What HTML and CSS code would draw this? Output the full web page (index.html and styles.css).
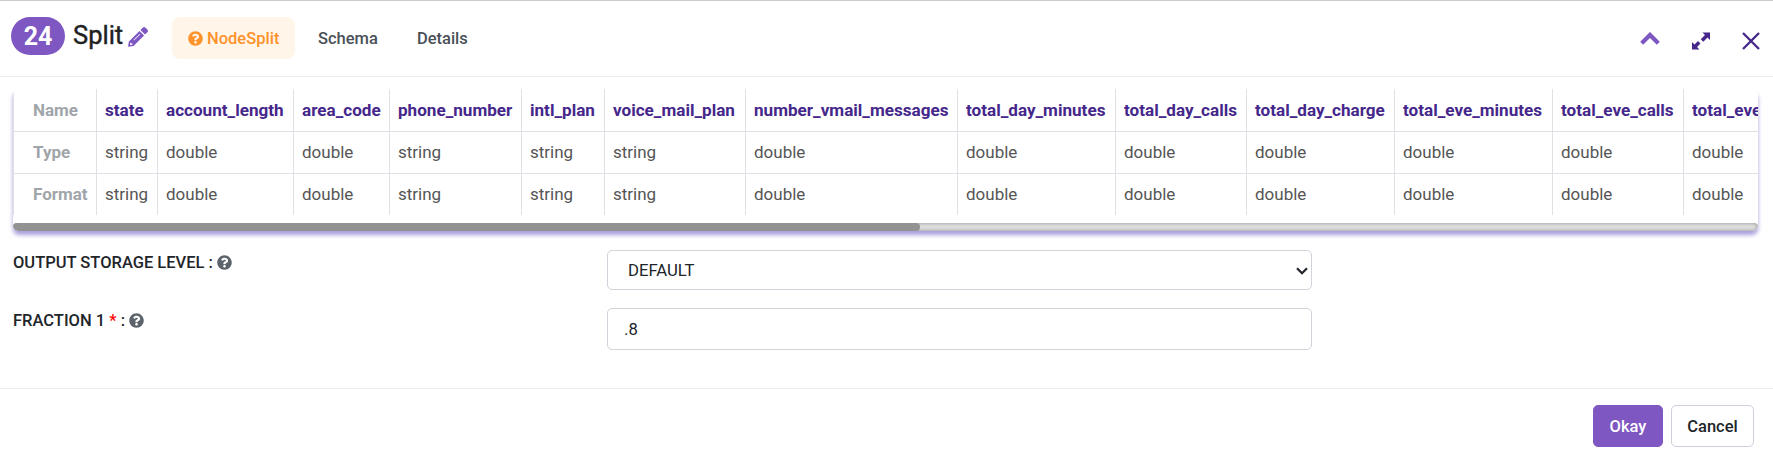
FILE: index.html
```html
<!DOCTYPE html>
<html lang="en">
<head>
<meta charset="utf-8">
<title>Split</title>
<link rel="stylesheet" href="styles.css">
</head>
<body>
<svg class="defs" width="0" height="0">
  <symbol id="help" viewBox="0 0 512 512"><path fill="currentColor" d="M504 256c0 137-111 248-248 248S8 393 8 256 119 8 256 8s248 111 248 248zM262.700 90c-54.500 0-89.300 23-116.500 63.800-3.500 5.300-2.400 12.400 2.700 16.300l34.700 26.300c5.200 3.900 12.600 3 16.700-2.100 17.900-22.700 30.100-35.800 57.300-35.800 20.400 0 45.700 13.100 45.700 33 0 15-12.400 22.700-32.500 34C247.100 238.500 216 254.900 216 296v4c0 6.600 5.400 12 12 12h56c6.600 0 12-5.400 12-12v-1.300c0-28.500 83.200-29.600 83.200-106.700 0-58-60.200-102-116.500-102zM256 338c-25.400 0-46 20.600-46 46s20.600 46 46 46 46-20.600 46-46-20.600-46-46-46z"/></symbol>
</svg>
<header class="header">
  <span class="badge">24</span>
  <h1 class="title">Split</h1>
  <svg class="pencil" viewBox="0 0 20 20"><path fill="currentColor" fill-rule="evenodd" d="M12.400 3 14.700.7a2 2 0 0 1 2.800 0l1.800 1.800a2 2 0 0 1 0 2.800L17 7.600zM11.500 3.900l4.600 4.600L5.500 19.100l-5 .7a.5.500 0 0 1-.4-.5l.8-4.800zM11.900 6.700l-6.400 6.400.5.500 6.400-6.400zM2.400 15.800l-.4 1.800.5.500 1.900-.4v-1.300H3.300v-.9z"/></svg>
  <nav class="tabs">
    <a class="tab active"><svg class="help-icon"><use href="#help"/></svg>NodeSplit</a>
    <a class="tab">Schema</a>
    <a class="tab">Details</a>
  </nav>
  <div class="actions">
    <svg class="chevron" viewBox="0 0 20 13"><path d="M1.700 11.200 10 2.900l8.300 8.300" fill="none" stroke="currentColor" stroke-width="4.200"/></svg>
    <svg class="expand" viewBox="0 0 18 18"><path fill="currentColor" d="M10.500.5H18V8l-2.500-2.500-4.200 4.200-2.500-2.500L13 3zM7.500 17.500H0V10l2.500 2.500L6 9l2.500 2.500L5 15z"/></svg>
    <svg class="close" viewBox="0 0 18 18"><path d="m1 1 16 16M17 1 1 17" fill="none" stroke="currentColor" stroke-width="2.300"/></svg>
  </div>
</header>
<main class="content">
  <div class="schema">
    <table class="schema-table">
      <colgroup><col class="w84"><col class="w61"><col class="w136"><col class="w96"><col class="w132"><col class="w83"><col class="w141"><col class="w212"><col class="w158"><col class="w131"><col class="w148"><col class="w158"><col class="w131"><col class="w148"></colgroup>
      <tr><th>Name</th><th>state</th><th>account_length</th><th>area_code</th><th>phone_number</th><th>intl_plan</th><th>voice_mail_plan</th><th>number_vmail_messages</th><th>total_day_minutes</th><th>total_day_calls</th><th>total_day_charge</th><th>total_eve_minutes</th><th>total_eve_calls</th><th>total_eve_charge</th></tr>
      <tr><th>Type</th><td>string</td><td>double</td><td>double</td><td>string</td><td>string</td><td>string</td><td>double</td><td>double</td><td>double</td><td>double</td><td>double</td><td>double</td><td>double</td></tr>
      <tr><th>Format</th><td>string</td><td>double</td><td>double</td><td>string</td><td>string</td><td>string</td><td>double</td><td>double</td><td>double</td><td>double</td><td>double</td><td>double</td><td>double</td></tr>
    </table>
    <div class="track"><div class="thumb"></div></div>
  </div>
  <div class="form">
    <label class="label">OUTPUT STORAGE LEVEL : <svg class="help-icon"><use href="#help"/></svg></label>
    <div class="field select">DEFAULT<svg class="arrow" viewBox="0 0 12 8"><path d="m1 1.300 5 5 5-5" fill="none" stroke="currentColor" stroke-width="2.200"/></svg></div>
    <label class="label">FRACTION 1 <span class="required">*</span> : <svg class="help-icon"><use href="#help"/></svg></label>
    <div class="field input">.8</div>
  </div>
</main>
<footer class="footer">
  <button class="button primary">Okay</button>
  <button class="button">Cancel</button>
</footer>
</body>
</html>
```
FILE: styles.css
```css
* { box-sizing: border-box; }
body {
  margin: 0;
  height: 462px;
  overflow: hidden;
  display: flex;
  flex-direction: column;
  background: #fff;
  color: #212529;
  font: 16.5px/24px Roboto, sans-serif;
}
svg { display: block; flex: none; }
.defs { display: none; }
.header {
  height: 77px;
  flex: none;
  display: flex;
  align-items: flex-start;
  border-top: 1px solid #ccc;
  border-bottom: 1px solid #e9ecef;
  padding: 16px 13px 0 11px;
}
.badge {
  width: 54px;
  height: 38px;
  border-radius: 19px;
  background: #7e57c2;
  color: #fff;
  font-size: 25px;
  font-weight: 700;
  line-height: 39px;
  text-align: center;
}
.title { margin: 0 0 0 8px; width: 50px; font-size: 25.500px; font-weight: 400; line-height: 37px; color: #212121; -webkit-text-stroke: 0.4px #212121; }
.pencil { width: 20px; height: 20px; margin: 10px 0 0 5px; color: #7e57c2; }
.tabs { display: flex; margin-left: 24px; }
.tab { height: 42px; display: flex; align-items: center; padding: 1px 16px 0; margin-right: 7px; border-radius: 8px; color: #495057; font-weight: 500; }
.tab.active { width: 123px; background: #fff5e9; color: #ff922b; }
.help-icon { display: inline-block; width: 15px; height: 15px; color: #5c636a; }
.tab .help-icon { color: inherit; margin-right: 4px; margin-top: -1px; }
.actions { margin-left: auto; display: flex; align-items: center; padding-top: 15px; color: #45278b; }
.chevron { width: 20px; height: 13px; margin: -5px 32px 0 0; color: #7e57c2; }
.expand { width: 18px; height: 18px; margin-right: 32px; }
.close { width: 18px; height: 18px; }
.content { flex: none; height: 311px; padding: 12px 15px 0 13px; }
.schema {
  height: 142px;
  overflow: hidden;
  border-radius: 6px;
  box-shadow: 0 4px 4px #a9a0dc;
}
.schema-table { width: 1817px; table-layout: fixed; border-collapse: separate; border-spacing: 0; margin-bottom: 8px; }
.schema-table th, .schema-table td {
  height: 42px;
  padding: 0 0 2px 8px;
  border-left: 1px solid #dee2e6;
  border-top: 1px solid #dee2e6;
  text-align: left;
  white-space: nowrap;
  font-size: 17px;
  line-height: 24px;
  color: #555;
}
.schema-table th { color: #45278b; font-weight: 700; font-size: 17.100px; }
.schema-table tr > :first-child { padding-left: 19px; color: #a0a5aa; font-size: 17px; }
.schema-table tr:first-child > * { border-top: 0; padding-bottom: 1px; }
.w84 { width: 83px; }
.w61 { width: 61px; }
.w136 { width: 136px; }
.w96 { width: 96px; }
.w132 { width: 132px; }
.w83 { width: 83px; }
.w141 { width: 141px; }
.w212 { width: 212px; }
.w158 { width: 158px; }
.w131 { width: 131px; }
.w148 { width: 148px; }
.track { height: 8px; border-radius: 8px; background: #e2e2e2; box-shadow: inset 0 0 4px #888; }
.thumb { width: 907px; height: 8px; border-radius: 5px; background: #929292; }
.form { display: grid; grid-template-columns: 594px 705px; grid-template-rows: 40px 42px; row-gap: 18px; margin-top: 19px; }
.label { font-weight: 500; white-space: pre; padding-top: 1px; }
.label .help-icon { vertical-align: -2px; }
.required { color: #f00; }
.field { border: 1px solid #ced4da; border-radius: 5px; display: flex; align-items: center; font-size: 16.700px; padding-top: 1px; }
.select { padding: 1px 3px 0 20px; justify-content: space-between; }
.arrow { width: 12px; height: 8px; }
.input { padding-left: 16px; }
.footer { flex: 1; border-top: 1px solid #e9ecef; padding: 16px 19px 0; display: flex; justify-content: flex-end; gap: 8px; }
.button { height: 42px; width: 83px; padding: 1px 0 0; border: 1px solid #ced0dc; border-radius: 5px; background: #fff; color: #212529; font: 500 16.500px/24px Roboto, sans-serif; }
.primary { width: 70px; border-color: #7e57c2; background: #7e57c2; color: #fff; }
```
